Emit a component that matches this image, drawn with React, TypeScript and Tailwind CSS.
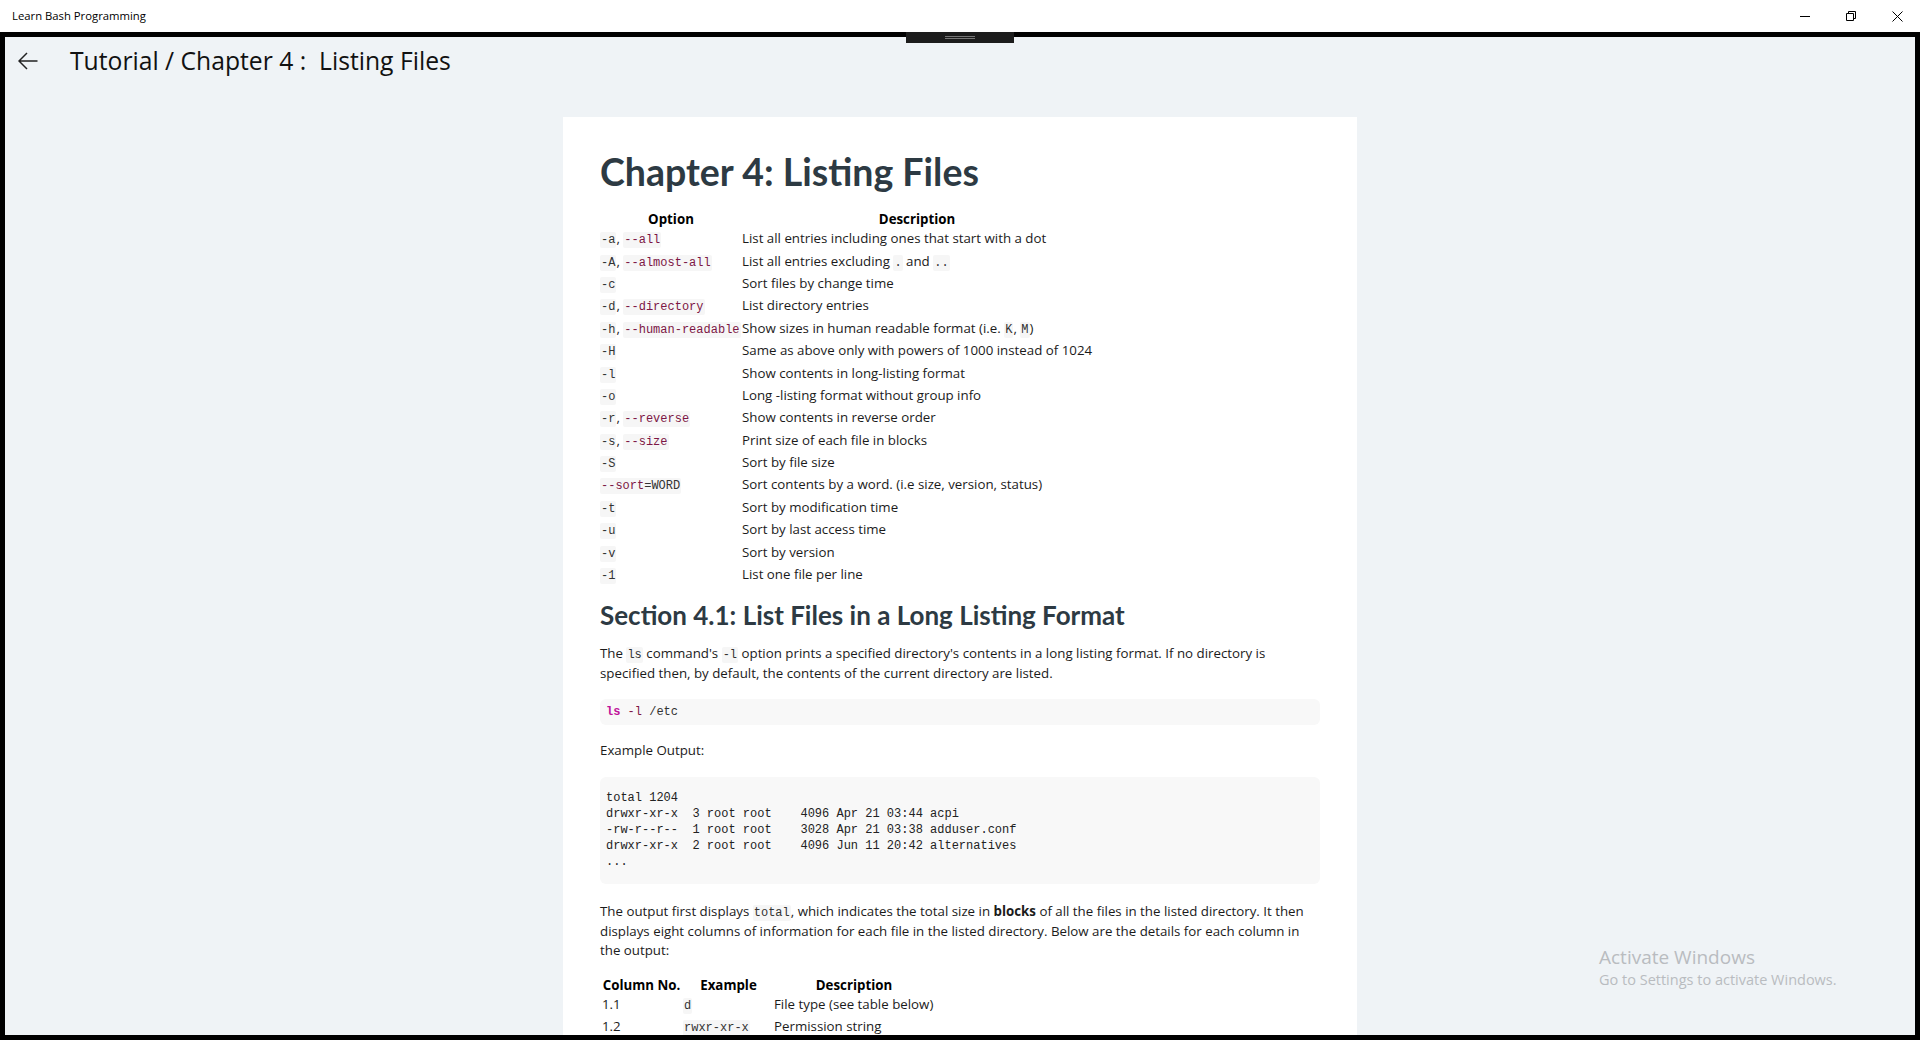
import React from 'react';

function C({ children, red }: { children: React.ReactNode; red?: boolean }) {
    return (
        <code
            className={`rounded-[2px] bg-[#f6f6f6] px-[1px] py-[1px] font-['Liberation_Mono',monospace] text-[12px] leading-none ${red ? 'text-[#7d1645]' : 'text-[#333333]'}`}
        >
            {children}
        </code>
    );
}

const options: [React.ReactNode, React.ReactNode][] = [
    [<><C>-a</C>, <C red>--all</C></>, 'List all entries including ones that start with a dot'],
    [<><C>-A</C>, <C red>--almost-all</C></>, <>List all entries excluding <C>.</C> and <C>..</C></>],
    [<C>-c</C>, 'Sort files by change time'],
    [<><C>-d</C>, <C red>--directory</C></>, 'List directory entries'],
    [<><C>-h</C>, <C red>--human-readable</C></>, <>Show sizes in human readable format (i.e. <C>K</C>, <C>M</C>)</>],
    [<C>-H</C>, 'Same as above only with powers of 1000 instead of 1024'],
    [<C>-l</C>, 'Show contents in long-listing format'],
    [<C>-o</C>, 'Long -listing format without group info'],
    [<><C>-r</C>, <C red>--reverse</C></>, 'Show contents in reverse order'],
    [<><C>-s</C>, <C red>--size</C></>, 'Print size of each file in blocks'],
    [<C>-S</C>, 'Sort by file size'],
    [
        <code className="rounded-[2px] bg-[#f6f6f6] px-[1px] py-[1px] font-['Liberation_Mono',monospace] text-[12px] leading-none text-[#333333]">
            <span className="text-[#7d1645]">--sort</span>=WORD
        </code>,
        'Sort contents by a word. (i.e size, version, status)',
    ],
    [<C>-t</C>, 'Sort by modification time'],
    [<C>-u</C>, 'Sort by last access time'],
    [<C>-v</C>, 'Sort by version'],
    [<C>-1</C>, 'List one file per line'],
];

const columns: [string, string, string][] = [
    ['1.1', 'd', 'File type (see table below)'],
    ['1.2', 'rwxr-xr-x', 'Permission string'],
    ['2', '3', 'Number of hard links'],
    ['3', 'root', 'Owner name'],
    ['4', 'root', 'Owner group'],
    ['5', '4096', 'File size in bytes'],
];

const output = `total 1204
drwxr-xr-x  3 root root    4096 Apr 21 03:44 acpi
-rw-r--r--  1 root root    3028 Apr 21 03:38 adduser.conf
drwxr-xr-x  2 root root    4096 Jun 11 20:42 alternatives
...`;

export default function App() {
    return (
        <div className="relative h-[1040px] w-[1920px] overflow-hidden bg-white font-['Open_Sans',sans-serif]">
            {/* title bar */}
            <div className="flex h-[32px] items-center justify-between bg-white">
                <span className="pl-[12px] text-[11.3px] text-black">Learn Bash Programming</span>
                <div className="flex h-full">
                    <div className="flex w-[46px] items-center justify-center">
                        <svg width="10" height="10" viewBox="0 0 10 10">
                            <path d="M0 5.5h10" stroke="#000" strokeWidth="1" />
                        </svg>
                    </div>
                    <div className="flex w-[46px] items-center justify-center">
                        <svg width="10" height="10" viewBox="0 0 10 10" fill="none">
                            <path d="M0.5 2.5h7v7h-7z" stroke="#000" strokeWidth="1" />
                            <path d="M2.5 2.5v-2h7v7h-2" stroke="#000" strokeWidth="1" />
                        </svg>
                    </div>
                    <div className="flex w-[46px] items-center justify-center">
                        <svg width="11" height="11" viewBox="0 0 11 11">
                            <path d="M0.5 0.5l10 10M10.5 0.5l-10 10" stroke="#000" strokeWidth="1" />
                        </svg>
                    </div>
                </div>
            </div>

            {/* window frame */}
            <div className="flex h-[1008px] flex-col overflow-hidden border-[5px] border-black bg-[#eff3f6]">
                <div className="flex h-[48px] shrink-0 items-center pl-[13px]">
                    <svg width="20" height="18" viewBox="0 0 20 18" fill="none">
                        <path d="M19.5 9H1M9 1L1 9l8 8" stroke="#222" strokeWidth="1.5" />
                    </svg>
                    <span className="ml-[32px] whitespace-pre text-[24.7px] leading-[32px] text-[#111]">
                        Tutorial / Chapter 4 :  Listing Files
                    </span>
                </div>

                <div className="mx-auto mt-[32px] w-[794px] shrink-0 bg-white px-[37px] pb-[40px] pt-[32px] text-[13.3px] text-[#1b1b1b]">
                    <h1 className="font-['Lato',sans-serif] text-[37.5px] font-bold leading-[46px] text-[#2d3a43]">
                        Chapter 4: Listing Files
                    </h1>

                    <table className="mt-[16px] border-collapse">
                        <thead>
                            <tr className="h-[16px]">
                                <th className="w-[142px] p-0 text-center font-bold leading-[16px] text-black">Option</th>
                                <th className="p-0 text-center font-bold leading-[16px] text-black">Description</th>
                            </tr>
                        </thead>
                        <tbody>
                            {options.map(([opt, desc], i) => (
                                <tr key={i} className="h-[22.4px]">
                                    <td className="whitespace-nowrap p-0 align-middle leading-[18px]">{opt}</td>
                                    <td className="whitespace-nowrap p-0 align-middle leading-[18px]">{desc}</td>
                                </tr>
                            ))}
                        </tbody>
                    </table>

                    <h2 className="mt-[15px] font-['Lato',sans-serif] text-[26px] font-bold leading-[30px] text-[#2d3a43]">
                        Section 4.1: List Files in a Long Listing Format
                    </h2>

                    <p className="mt-[14px] leading-[19.6px]">
                        The <C>ls</C> command's <C>-l</C> option prints a specified directory's contents in a long
                        listing format. If no directory is specified then, by default, the contents of the current
                        directory are listed.
                    </p>

                    <div className="mt-[16px] flex h-[26px] items-center rounded-[6px] bg-[#f8f8f8] pl-[6px] font-['Liberation_Mono',monospace] text-[12px] text-[#333]">
                        <span className="font-bold text-[#c0139a]">ls</span>
                        <span className="whitespace-pre"> </span>
                        <span className="text-[#7d1645]">-l</span>
                        <span className="whitespace-pre"> /etc</span>
                    </div>

                    <p className="mt-[16px] leading-[19.6px]">Example Output:</p>

                    <pre className="mt-[16px] rounded-[6px] bg-[#f8f8f8] pb-[14px] pl-[6px] pt-[13px] font-['Liberation_Mono',monospace] text-[12px] leading-[16px] text-[#222]">
                        {output}
                    </pre>

                    <p className="mt-[18px] leading-[19.6px]">
                        The output first displays <C>total</C>, which indicates the total size in{' '}
                        <b className="font-bold">blocks</b> of all the files in the listed directory. It then displays
                        eight columns of information for each file in the listed directory. Below are the details for
                        each column in the output:
                    </p>

                    <table className="mt-[16px] table-fixed border-collapse">
                        <thead>
                            <tr className="h-[16px]">
                                <th className="w-[83px] p-0 text-center font-bold leading-[16px] text-black">Column No.</th>
                                <th className="w-[91px] p-0 text-center font-bold leading-[16px] text-black">Example</th>
                                <th className="w-[160px] p-0 text-center font-bold leading-[16px] text-black">Description</th>
                            </tr>
                        </thead>
                        <tbody>
                            {columns.map(([no, ex, desc]) => (
                                <tr key={no} className="h-[22.4px]">
                                    <td className="whitespace-nowrap p-0 pl-[2px] align-middle leading-[18px]">{no}</td>
                                    <td className="whitespace-nowrap p-0 align-middle leading-[18px]">
                                        <C>{ex}</C>
                                    </td>
                                    <td className="whitespace-nowrap p-0 align-middle leading-[18px]">{desc}</td>
                                </tr>
                            ))}
                        </tbody>
                    </table>
                </div>
            </div>

            {/* drag handle over the frame */}
            <div className="absolute left-[906px] top-[32px] flex h-[11px] w-[108px] flex-col items-center gap-[1px] bg-[#1c1c1c] pt-[4px]">
                <div className="h-[1px] w-[30px] bg-[#777]" />
                <div className="h-[1px] w-[30px] bg-[#777]" />
            </div>

            {/* activation watermark */}
            <div className="pointer-events-none absolute left-[1599px] top-[944px] text-[#b9bcc0]">
                <div className="text-[19px] leading-[26px]">Activate Windows</div>
                <div className="text-[14.5px] leading-[19px]">Go to Settings to activate Windows.</div>
            </div>
        </div>
    );
}
